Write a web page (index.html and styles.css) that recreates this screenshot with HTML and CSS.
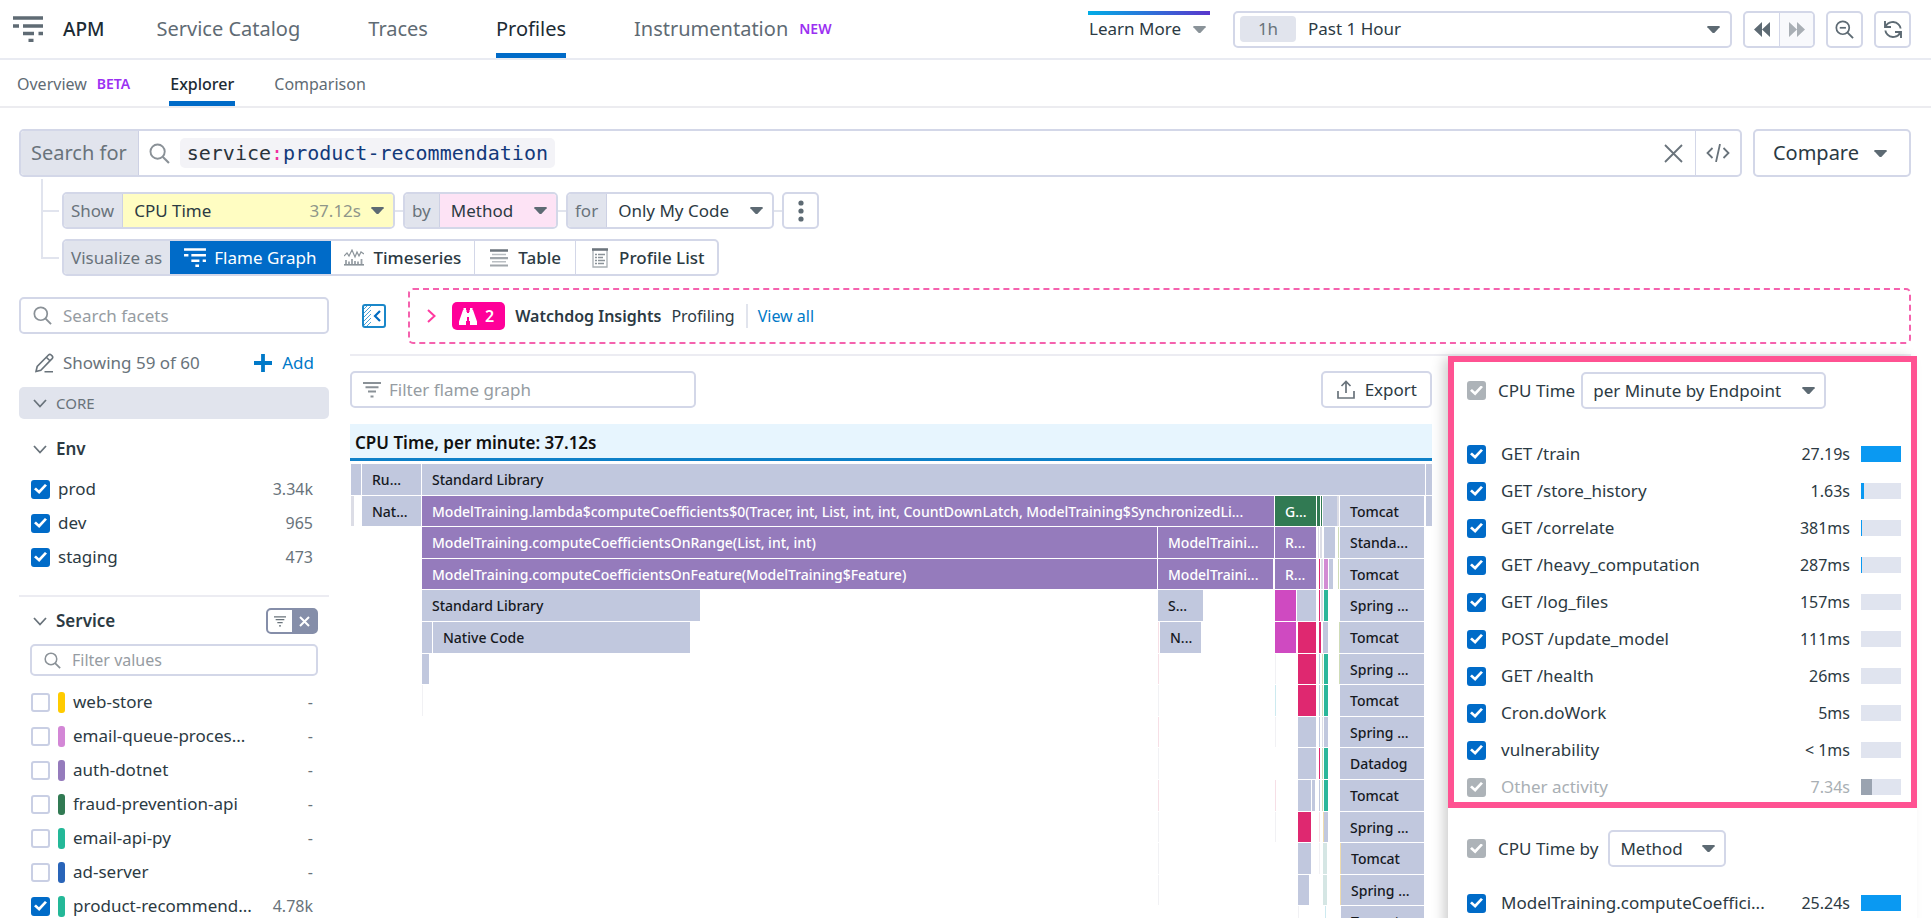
FILE: index.html
```html
<!DOCTYPE html>
<html lang="en">
<head>
<meta charset="utf-8">
<title>APM Profiles Explorer</title>
<link rel="stylesheet" href="styles.css">
</head>
<body>
<svg class="defs" aria-hidden="true">
  <symbol id="caret" viewBox="0 0 14 8"><path d="M0 0h14v1.500L8.500 7.300q-1.500 1.200-3 0L0 1.500z" fill="currentColor"/></symbol>
  <symbol id="search" viewBox="0 0 20 20"><circle cx="8.200" cy="8.200" r="6.800" fill="none" stroke="currentColor" stroke-width="1.800"/><path d="M13 13l6 6" stroke="currentColor" stroke-width="2"/></symbol>
  <symbol id="chevron" viewBox="0 0 14 9"><path d="M1 1l6 6.500L13 1" fill="none" stroke="currentColor" stroke-width="1.800"/></symbol>
  <symbol id="funnel" viewBox="0 0 18 16"><path d="M0 1h18M2.500 5.300h13M5 9.600h8M7.500 14.500h3" fill="none" stroke="currentColor" stroke-width="2"/></symbol>
  <symbol id="flame" viewBox="0 0 30 26"><path d="M0 2h30M0 10h6M10 10h20M10 17.500h11M25.500 17.500h4.500M15.500 24.500h5" fill="none" stroke="currentColor" stroke-width="3.600"/></symbol>
</svg>

<header class="topbar">
  <svg class="logo" viewBox="0 0 30 26"><use href="#flame"/></svg>
  <a class="brand" href="#">APM</a>
  <nav class="topnav">
    <a href="#">Service Catalog</a>
    <a href="#">Traces</a>
    <a href="#" class="active">Profiles</a>
    <a href="#">Instrumentation <span class="tag">NEW</span></a>
  </nav>
  <button class="learn">Learn More <svg class="caret"><use href="#caret"/></svg></button>
  <div class="timepicker">
    <span class="span-chip">1h</span>
    <div class="pick grow"><select aria-label="Time range"><option>Past 1 Hour</option></select><svg class="caret"><use href="#caret"/></svg></div>
  </div>
  <div class="pager">
    <button aria-label="Back"><svg width="16" height="15" viewBox="0 0 16 15"><path d="M8 0v15L0 7.500zM16 0v15L8 7.500z" fill="currentColor"/></svg></button>
    <button aria-label="Forward" disabled><svg width="16" height="15" viewBox="0 0 16 15"><path d="M0 0v15l8-7.500zM8 0v15l8-7.500z" fill="currentColor"/></svg></button>
  </div>
  <button class="square" aria-label="Zoom out"><svg width="19" height="19" viewBox="0 0 20 20"><use href="#search"/><path d="M5 8.200h6.500" stroke="currentColor" stroke-width="1.800"/></svg></button>
  <button class="square" aria-label="Refresh"><svg width="20" height="19" viewBox="0 0 20 19" fill="none" stroke="currentColor" stroke-width="1.900"><path d="M2 1v6h6M2.500 6.500C5 1.500 12 .5 15.500 4.300 16.800 5.600 17.500 7 17.600 8.500M18 18v-6h-6M17.500 12.500C15 17.500 8 18.500 4.500 14.700 3.200 13.400 2.500 12 2.400 10.500"/></svg></button>
</header>

<nav class="subnav">
  <a href="#">Overview <span class="tag">BETA</span></a>
  <a href="#" class="active">Explorer</a>
  <a href="#">Comparison</a>
</nav>

<div class="searchrow">
  <div class="searchbar">
    <label class="lbl" for="q">Search for</label>
    <svg class="mag" width="21" height="21"><use href="#search"/></svg>
    <code class="token">service<b>:</b><i>product-recommendation</i></code>
    <input id="q" type="text">
    <button class="clear" aria-label="Clear"><svg width="19" height="19" viewBox="0 0 19 19"><path d="M1 1l17 17M18 1L1 18" stroke="currentColor" stroke-width="1.800"/></svg></button>
    <button class="code" aria-label="Edit as code"><svg width="24" height="18" viewBox="0 0 24 18" fill="none" stroke="currentColor" stroke-width="1.800"><path d="M6.500 4L1.500 9l5 5M17.500 4l5 5-5 5M14 0l-4 18"/></svg></button>
  </div>
  <button class="compare">Compare <svg class="caret"><use href="#caret"/></svg></button>
</div>

<section class="tools">
  <svg class="tree" width="18" height="81" viewBox="0 0 18 81"><path d="M1 0v79h17M1 32h17" fill="none" stroke="#e1e4ee" stroke-width="2"/></svg>
  <div class="toolrows">
    <div class="toolrow">
      <div class="combo show"><label class="lbl" for="metric">Show</label>
        <div class="pick yellow"><select id="metric"><option>CPU Time</option></select><span class="amount">37.12s</span><svg class="caret"><use href="#caret"/></svg></div></div>
      <span class="link"></span>
      <div class="combo by"><label class="lbl" for="dim">by</label>
        <div class="pick rose"><select id="dim"><option>Method</option></select><svg class="caret"><use href="#caret"/></svg></div></div>
      <span class="link"></span>
      <div class="combo for"><label class="lbl" for="scope">for</label>
        <div class="pick"><select id="scope"><option>Only My Code</option></select><svg class="caret"><use href="#caret"/></svg></div></div>
      <span class="link"></span>
      <button class="square" aria-label="More options"><svg width="6" height="22" viewBox="0 0 6 22" fill="#5d6a73"><circle cx="3" cy="3" r="2.600"/><circle cx="3" cy="11" r="2.600"/><circle cx="3" cy="19" r="2.600"/></svg></button>
    </div>
    <div class="toolrow">
      <div class="combo views">
        <span class="lbl">Visualize as</span>
        <button class="on"><svg width="22" height="19"><use href="#flame"/></svg>Flame Graph</button>
        <button><svg width="20" height="17" viewBox="0 0 20 17"><path d="M0 7l3-3 2 3 3-6 3 7 2-5 2 4 2-4 3 2" fill="none" stroke="#8d959b" stroke-width="1.200"/><path d="M0 15.800h20" stroke="#8b9399" stroke-width="1.600"/><path d="M2 15v-4M5 15v-2.500M8 15v-5M11 15v-3M14 15v-2.500M17.500 15v-5" stroke="#9aa1a7" stroke-width="1.800"/></svg>Timeseries</button>
        <button class="table-view"><svg width="18" height="18" viewBox="0 0 18 18"><path d="M0 1.500h18" stroke="#6c757c" stroke-width="2.600"/><path d="M2 5.500h14M2 12.800h14" stroke="#b9bec2" stroke-width="1.400"/><path d="M0 9.200h18M0 16.500h18" stroke="#a0a6ab" stroke-width="2.200"/></svg>Table</button>
        <button><svg width="16" height="20" viewBox="0 0 16 20"><path d="M1 1.500h14V19H1z" fill="none" stroke="#a8aeb3" stroke-width="1.300"/><path d="M0 1.500h16" stroke="#6c757c" stroke-width="2.600"/><path d="M3 6.500h2M6 6.500h7M3 9.500h2M6 9.500h5M3 12.500h2M6 12.500h7M3 15.500h2M6 15.500h6" stroke="#8b9399" stroke-width="1.400"/></svg>Profile List</button>
      </div>
    </div>
  </div>
</section>

<div class="body">
  <aside class="facets">
    <label class="field"><svg width="19" height="19"><use href="#search"/></svg><input type="text" placeholder="Search facets" aria-label="Search facets"></label>
    <div class="showing">
      <svg width="19" height="20" viewBox="0 0 19 20" fill="none" stroke="#69737b" stroke-width="1.600"><path d="M1 18.500l1.200-5L13.500 2q1.300-1.300 2.700 0l.9.900q1.300 1.300 0 2.700L5.800 17.200zM11.300 4.200l3.600 3.600M9.500 18.700H18"/></svg>
      <span>Showing 59 of 60</span>
      <button class="add"><svg width="18" height="18" viewBox="0 0 18 18"><path d="M9 0v18M0 9h18" stroke="currentColor" stroke-width="3.800"/></svg>Add</button>
    </div>
    <button class="group"><svg width="14" height="9"><use href="#chevron"/></svg>CORE</button>
    <button class="facet-head"><svg width="14" height="9"><use href="#chevron"/></svg>Env</button>
    <ul class="facet-list">
      <li><label><input type="checkbox" checked>prod</label><span>3.34k</span></li>
      <li><label><input type="checkbox" checked>dev</label><span>965</span></li>
      <li><label><input type="checkbox" checked>staging</label><span>473</span></li>
    </ul>
    <div class="service-head">
      <button class="facet-title"><svg width="14" height="9"><use href="#chevron"/></svg>Service</button>
      <div class="mini"><button aria-label="Filter"><svg width="12" height="11"><use href="#funnel"/></svg></button><button class="dark" aria-label="Clear filter"><svg width="11" height="11" viewBox="0 0 11 11"><path d="M1 1l9 9M10 1l-9 9" stroke="#fff" stroke-width="2"/></svg></button></div>
    </div>
    <label class="field small"><svg width="17" height="17"><use href="#search"/></svg><input type="text" placeholder="Filter values" aria-label="Filter values"></label>
    <ul class="facet-list">
      <li><label><input type="checkbox"><em class="pill gold"></em>web-store</label><span>-</span></li>
      <li><label><input type="checkbox"><em class="pill orchid"></em>email-queue-proces...</label><span>-</span></li>
      <li><label><input type="checkbox"><em class="pill violet"></em>auth-dotnet</label><span>-</span></li>
      <li><label><input type="checkbox"><em class="pill green"></em>fraud-prevention-api</label><span>-</span></li>
      <li><label><input type="checkbox"><em class="pill teal"></em>email-api-py</label><span>-</span></li>
      <li><label><input type="checkbox"><em class="pill blue"></em>ad-server</label><span>-</span></li>
      <li><label><input type="checkbox" checked><em class="pill teal"></em>product-recommend...</label><span>4.78k</span></li>
    </ul>
  </aside>

  <main class="content">
    <div class="insights-row">
      <button class="collapse" aria-label="Collapse sidebar"><svg width="24" height="24" viewBox="0 0 24 24" fill="none" stroke="#1a87c9"><rect x="1" y="1" width="22" height="22" rx="2" fill="#fff" stroke-width="2"/><path d="M2 5l3-3M2 9l7-7M2 13l7-7M2 17l7-7M2 21l7-7M5 22l4-4" stroke-width=".8"/><path d="M18 7l-5 5 5 5" stroke="#006bc2" stroke-width="2.200"/></svg></button>
      <div class="insights">
        <svg class="arrow" width="9" height="14" viewBox="0 0 9 14"><path d="M1 1l6.500 6L1 13" fill="none" stroke="#ff3aa0" stroke-width="2"/></svg>
        <span class="badge"><svg width="18" height="17" viewBox="0 0 18 17" fill="#fff"><path d="M4 2h3.500v2H8v9H7v4H0v-3.500zM14 2h-3.500v2H10v9h1v4h7v-3.500zM4.500 0h2.500v2H4.500zM11 0h2.500v2H11zM8 5h2v4H8z"/></svg>2</span>
        <strong>Watchdog Insights</strong>
        <span>Profiling</span>
        <a href="#">View all</a>
      </div>
    </div>
    <div class="split">
      <section class="graph">
        <div class="graph-tools">
          <label class="field filter"><svg width="18" height="16"><use href="#funnel"/></svg><input type="text" placeholder="Filter flame graph" aria-label="Filter flame graph"></label>
          <button class="export"><svg width="18" height="19" viewBox="0 0 18 19" fill="none" stroke="#69737b" stroke-width="1.700"><path d="M1 11v7h16v-7M9 13V1.500M4.500 6L9 1.500 13.500 6"/></svg>Export</button>
        </div>
        <h2>CPU Time, per minute: 37.12s</h2>
        <div class="flamegraph">
          <div class="row"><i style="--x:1;--w:10"></i><i style="--x:12;--w:59">Ru...</i><i style="--x:72;--w:1003">Standard Library</i><i style="--x:1076;--w:6"></i></div>
          <div class="row"><i class="pale" style="--x:1;--w:3"></i><i style="--x:12;--w:59">Nat...</i><i class="violet" style="--x:72;--w:852">ModelTraining.lambda$computeCoefficients$0(Tracer, int, List, int, int, CountDownLatch, ModelTraining$SynchronizedLi...</i><i class="green" style="--x:925;--w:41">G...</i><i class="green" style="--x:967;--w:3"></i><i class="green" style="--x:971;--w:1"></i><i style="--x:973;--w:14"></i><i class="pale" style="--x:987;--w:2"></i><i style="--x:990;--w:84">Tomcat</i><i style="--x:1076;--w:6"></i></div>
          <div class="row"><i class="violet" style="--x:72;--w:735">ModelTraining.computeCoefficientsOnRange(List, int, int)</i><i class="violet" style="--x:808;--w:116">ModelTraini...</i><i class="violet" style="--x:925;--w:41">R...</i><i class="pale" style="--x:968;--w:1"></i><i class="pale" style="--x:970;--w:2"></i><i style="--x:974;--w:11"></i><i class="lime" style="--x:988;--w:1"></i><i style="--x:990;--w:84">Standa...</i></div>
          <div class="row"><i class="violet" style="--x:72;--w:735">ModelTraining.computeCoefficientsOnFeature(ModelTraining$Feature)</i><i class="violet" style="--x:808;--w:115">ModelTraini...</i><i class="violet" style="--x:925;--w:41">R...</i><i class="crimson" style="--x:969;--w:1"></i><i class="pale" style="--x:971;--w:2"></i><i class="orchid" style="--x:974;--w:4"></i><i style="--x:979;--w:4"></i><i class="lime" style="--x:988;--w:1"></i><i style="--x:990;--w:84">Tomcat</i></div>
          <div class="row"><i style="--x:72;--w:278">Standard Library</i><i style="--x:808;--w:45">S...</i><i class="magenta" style="--x:925;--w:21"></i><i style="--x:947;--w:19"></i><i class="crimson" style="--x:969;--w:1"></i><i class="pale" style="--x:971;--w:2"></i><i class="teal" style="--x:974;--w:4"></i><i style="--x:990;--w:84">Spring ...</i></div>
          <div class="row"><i style="--x:72;--w:10"></i><i style="--x:83;--w:257">Native Code</i><i class="blush" style="--x:808;--w:1"></i><i style="--x:810;--w:41">N...</i><i class="magenta" style="--x:925;--w:21"></i><i class="crimson" style="--x:948;--w:18"></i><i class="crimson" style="--x:969;--w:2"></i><i style="--x:973;--w:5"></i><i class="lime" style="--x:989;--w:1"></i><i style="--x:990;--w:84">Tomcat</i></div>
          <div class="row"><i style="--x:72;--w:7"></i><i class="blush" style="--x:808;--w:1"></i><i class="faint" style="--x:925;--w:1"></i><i class="crimson" style="--x:948;--w:18"></i><i style="--x:969;--w:1"></i><i class="lime" style="--x:972;--w:1"></i><i class="teal" style="--x:974;--w:4"></i><i class="lime" style="--x:989;--w:1"></i><i style="--x:990;--w:84">Spring ...</i></div>
          <div class="row"><i class="faint" style="--x:72;--w:1"></i><i class="faint" style="--x:808;--w:1"></i><i class="aqua" style="--x:925;--w:1"></i><i class="crimson" style="--x:948;--w:18"></i><i style="--x:969;--w:1"></i><i class="lime" style="--x:972;--w:1"></i><i class="teal" style="--x:974;--w:4"></i><i style="--x:990;--w:84">Tomcat</i></div>
          <div class="row"><i class="blush" style="--x:808;--w:1"></i><i class="faint" style="--x:925;--w:1"></i><i style="--x:948;--w:18"></i><i style="--x:969;--w:1"></i><i class="pale" style="--x:972;--w:1"></i><i style="--x:974;--w:4"></i><i style="--x:990;--w:84">Spring ...</i></div>
          <div class="row"><i class="faint" style="--x:808;--w:1"></i><i style="--x:948;--w:18"></i><i class="crimson" style="--x:969;--w:1"></i><i class="lime" style="--x:972;--w:1"></i><i class="teal" style="--x:974;--w:4"></i><i style="--x:990;--w:84">Datadog</i></div>
          <div class="row"><i class="blush" style="--x:808;--w:1"></i><i class="blush" style="--x:925;--w:1"></i><i style="--x:948;--w:13"></i><i style="--x:962;--w:3"></i><i style="--x:969;--w:1"></i><i class="lime" style="--x:972;--w:1"></i><i class="teal" style="--x:974;--w:4"></i><i style="--x:990;--w:84">Tomcat</i></div>
          <div class="row"><i class="faint" style="--x:808;--w:1"></i><i class="faint" style="--x:925;--w:1"></i><i class="crimson" style="--x:948;--w:13"></i><i class="blush" style="--x:969;--w:1"></i><i class="sand" style="--x:973;--w:1"></i><i style="--x:974;--w:4"></i><i style="--x:990;--w:84">Spring ...</i></div>
          <div class="row"><i class="faint" style="--x:808;--w:1"></i><i style="--x:948;--w:13"></i><i class="faint" style="--x:969;--w:1"></i><i class="mint" style="--x:973;--w:4"></i><i class="sand" style="--x:990;--w:1"></i><i style="--x:991;--w:83">Tomcat</i></div>
          <div class="row"><i class="faint" style="--x:808;--w:1"></i><i style="--x:948;--w:11"></i><i class="mint" style="--x:973;--w:4"></i><i class="sand" style="--x:990;--w:1"></i><i style="--x:991;--w:83">Spring ...</i></div>
          <div class="row"><i class="faint" style="--x:948;--w:1"></i><i class="aqua" style="--x:975;--w:1"></i><i style="--x:991;--w:83">Tomcat</i></div>
        </div>
      </section>

      <aside class="panel">
        <section class="endpoints">
          <div class="panel-head"><label><input type="checkbox" checked class="muted">CPU Time</label>
            <div class="pick boxed wide"><select aria-label="Breakdown"><option>per Minute by Endpoint</option></select><svg class="caret"><use href="#caret"/></svg></div></div>
          <ul class="measures">
            <li><label><input type="checkbox" checked>GET /train</label><span>27.19s</span><div class="bar"><div style="width:100%"></div></div></li>
            <li><label><input type="checkbox" checked>GET /store_history</label><span>1.63s</span><div class="bar"><div style="width:7%"></div></div></li>
            <li><label><input type="checkbox" checked>GET /correlate</label><span>381ms</span><div class="bar"><div style="width:2%"></div></div></li>
            <li><label><input type="checkbox" checked>GET /heavy_computation</label><span>287ms</span><div class="bar"><div style="width:1%"></div></div></li>
            <li><label><input type="checkbox" checked>GET /log_files</label><span>157ms</span><div class="bar"></div></li>
            <li><label><input type="checkbox" checked>POST /update_model</label><span>111ms</span><div class="bar"></div></li>
            <li><label><input type="checkbox" checked>GET /health</label><span>26ms</span><div class="bar"></div></li>
            <li><label><input type="checkbox" checked>Cron.doWork</label><span>5ms</span><div class="bar"></div></li>
            <li><label><input type="checkbox" checked>vulnerability</label><span>&lt; 1ms</span><div class="bar"></div></li>
            <li class="other"><label><input type="checkbox" checked class="muted">Other activity</label><span>7.34s</span><div class="bar"><div style="width:27%"></div></div></li>
          </ul>
        </section>
        <section class="methods">
          <div class="panel-head spaced"><label><input type="checkbox" checked class="muted">CPU Time by</label>
            <div class="pick boxed"><select aria-label="Group by"><option>Method</option></select><svg class="caret"><use href="#caret"/></svg></div></div>
          <ul class="measures">
            <li><label><input type="checkbox" checked>ModelTraining.computeCoeffici...</label><span>25.24s</span><div class="bar"><div style="width:100%"></div></div></li>
          </ul>
        </section>
      </aside>
    </div>
  </main>
</div>
</body>
</html>
```
FILE: styles.css
```css
:root {
  --ink: #2c3a43;
  --gray: #69737b;
  --line: #d3d7e8;
  --fill: #e1e4ed;
  --blue: #006bc8;
  --link: #0079c8;
}
* { box-sizing: border-box; }
body {
  margin: 0;
  height: 100vh;
  overflow: hidden;
  background: #fff;
  color: var(--ink);
  font: 16px/24px "Noto Sans", sans-serif;
}
a { color: inherit; text-decoration: none; }
button, input, select { font: inherit; color: inherit; }
button { margin: 0; padding: 0; border: 0; background: none; cursor: pointer; display: flex; align-items: center; white-space: nowrap; }
svg { flex: none; display: block; }
ul { list-style: none; margin: 0; padding: 0; }
.defs { position: absolute; width: 0; height: 0; }
.caret { width: 13px; height: 7px; color: #5d6a73; }
.grow { flex: 1; }

/* header */
.topbar { display: flex; align-items: center; height: 60px; padding: 0 20px 0 13px; border-bottom: 2px solid #e9ebf2; }
.logo { width: 30px; height: 26px; color: #5f6b74; }
.brand { margin: 0 52px 0 20px; font-size: 19px; font-weight: 500; color: #1c2b34; }
.topnav { display: flex; align-self: stretch; gap: 68px; font-size: 20px; color: #5f6b74; white-space: nowrap; }
.topnav a { display: flex; align-items: center; gap: 11px; border: solid transparent; border-width: 5px 0; }
.topnav .active, .subnav .active { color: #1c2b34; border-bottom-color: var(--blue); }
.tag { color: #9b30f2; font-size: 14px; font-weight: 600; }
.learn { margin-left: auto; margin-right: 23px; height: 37px; gap: 12px; padding: 0 4px 4px 1px; font-size: 17px; border-top: 4px solid; border-image: linear-gradient(90deg, #00aee6, #5a35cc) 1; }
.learn .caret { color: #8a9399; }
.timepicker { display: flex; align-items: center; flex: 0 1 499px; height: 37px; padding: 0 10px 0 5px; border: 2px solid var(--line); border-radius: 5px; font-size: 17px; }
.span-chip { width: 56px; margin-right: 12px; line-height: 26px; border-radius: 4px; background: var(--fill); color: var(--gray); text-align: center; }
.pager { display: flex; height: 37px; margin: 0 11px; border: 2px solid var(--line); border-radius: 5px; overflow: hidden; color: #5d6a73; }
.pager button { width: 34px; justify-content: center; }
.pager button:disabled { color: #a9afb5; background: #f8f9fc; border-left: 1px solid var(--line); }
.square { width: 37px; height: 37px; justify-content: center; border: 2px solid var(--line); border-radius: 5px; color: #5d6a73; }
.square + .square { margin-left: 11px; }

.subnav { display: flex; gap: 39px; height: 48px; padding-left: 17px; border-bottom: 2px solid #ececf0; color: #5f6b74; }
.subnav a { display: flex; align-items: center; gap: 10px; border: solid transparent; border-width: 7px 0 5px; }
.subnav .active { padding: 0 1px; font-weight: 500; }

/* pick: a select with its caret in the same cell */
.pick { display: grid; grid-template-columns: 1fr auto; align-items: center; }
.pick > * { grid-row: 1; grid-column: 2; }
.pick select { grid-column: 1 / 3; appearance: none; width: 100%; height: 100%; border: 0; background: none; padding: 0; outline: 0; }
.pick .caret { pointer-events: none; }

/* search */
.searchrow { display: flex; gap: 11px; margin: 21px 20px 0 19px; font-size: 20px; }
.searchbar { display: flex; align-items: center; flex: 1; height: 48px; border: 2px solid var(--line); border-radius: 5px; overflow: hidden; }
.lbl { display: flex; align-items: center; align-self: stretch; background: var(--fill); color: var(--gray); border-right: 1px solid #cdd1e4; white-space: nowrap; }
.searchbar .lbl { padding: 0 11px 0 10px; }
.mag { margin: 0 10px; color: #8a9197; }
.token { padding: 0 7px; border-radius: 5px; background: #f3f3f7; color: #2a343a; font: 20px/30px "DejaVu Sans Mono", monospace; }
.token b { font-weight: 400; color: #f02ea0; }
.token i { font-style: normal; color: #12397a; }
.searchbar input { flex: 1; min-width: 0; border: 0; outline: 0; background: none; padding: 0 8px; }
.clear { margin-right: 12px; color: #69737b; }
.code { align-self: stretch; width: 45px; justify-content: center; border-left: 1px solid var(--line); color: #69737b; }
.compare { height: 48px; gap: 15px; padding: 0 22px 0 18px; border: 2px solid var(--line); border-radius: 5px; }

/* query tools */
.tools { display: flex; margin: 2px 20px 0 41px; font-size: 17px; }
.tree { margin-right: 3px; }
.toolrows { display: flex; flex-direction: column; gap: 10px; padding-top: 13px; }
.toolrow { display: flex; align-items: center; }
.combo { display: flex; height: 37px; border: 2px solid var(--line); border-radius: 5px; overflow: hidden; }
.combo .lbl { padding: 0 8px 0 7px; }
.combo .pick { flex: 1; padding: 0 9px 0 11px; }
.amount { margin-right: 10px; color: #8f968a; pointer-events: none; }
.pick.yellow { grid-template-columns: 1fr auto auto; background: #fffdc2; }
.pick.yellow select { grid-column: 1 / 4; }
.pick.yellow .caret { grid-column: 3; }
.pick.rose { background: #fde3f5; }
.show { width: 333px; }
.by { width: 155px; }
.for { width: 208px; }
.link { width: 8px; height: 2px; background: var(--fill); }
.views button { gap: 9px; padding: 0 13px; border-right: 1px solid var(--line); font-weight: 500; }
.views .table-view { padding: 0 14px 0 15px; gap: 10px; }
.views button:last-child { border: 0; padding: 0 12px 0 16px; gap: 11px; }
.views .on { margin: -2px 0; padding: 0 15px 0 14px; gap: 8px; background: var(--blue); color: #fff; border: 0; font-weight: 400; }
.combo.views .lbl { border: 0; }

/* layout under the query */
.body { display: flex; gap: 21px; margin: 12px 14px 0 19px; }
.facets { flex: 0 0 310px; padding-top: 9px; }
.content { flex: 1; min-width: 0; }
.field { display: flex; align-items: center; gap: 11px; height: 37px; padding: 0 12px; border: 2px solid var(--line); border-radius: 5px; color: #8a9197; font-size: 17px; }
.field input { flex: 1; min-width: 0; border: 0; outline: 0; padding: 0; background: none; }
.field input::placeholder { color: #969ca2; }
.field.small { height: 32px; margin: 10px 11px 9px; font-size: 16px; }
.field.filter { flex: 0 1 346px; padding: 0 11px; gap: 8px; }

input[type="checkbox"] { appearance: none; display: grid; place-items: center; flex: none; width: 19px; height: 19px; margin: 0; border: 2px solid #c9cfe4; border-radius: 3px; background: #fff; }
input[type="checkbox"]:checked { border-color: var(--blue); background: var(--blue); }
input[type="checkbox"].muted:checked { border-color: #adb3b8; background: #adb3b8; }
input[type="checkbox"]:checked::before { content: ""; width: 13px; height: 10px; background: #fff; clip-path: polygon(0 52%, 15% 34%, 38% 62%, 84% 0, 100% 16%, 40% 100%); }

.showing { display: flex; align-items: center; height: 53px; padding: 4px 15px 0 16px; gap: 9px; font-size: 17px; color: var(--gray); }
.add { margin-left: auto; gap: 10px; color: var(--link); }
.group { width: 100%; height: 32px; gap: 16px; padding-left: 14px; border-radius: 5px; background: var(--fill); color: var(--gray); font-size: 15px; }
.facet-head, .facet-title { gap: 9px; padding-left: 14px; font-size: 17px; font-weight: 600; }
.facet-head { height: 30px; margin: 15px 0 8px; }
.group { gap: 9px; }
.group svg, .facet-head svg, .facet-title svg { color: #69737b; }
.facet-list li { display: flex; align-items: center; justify-content: space-between; height: 34px; padding: 0 16px 0 12px; color: var(--gray); }
.facet-list label { display: flex; align-items: center; gap: 8px; color: var(--ink); font-size: 17px; }
.pill { width: 7px; height: 21px; border-radius: 3px; }
.gold { background: #ffcb00; } .orchid { background: #d387d6; } .violet { background: #957bbc; }
.green { background: #317a53; } .teal { background: #24b898; } .blue { background: #2964b8; }
.service-head { display: flex; align-items: center; justify-content: space-between; margin-top: 21px; padding: 11px 11px 0 0; border-top: 2px solid #ececf2; }
.mini { display: flex; height: 26px; border: 2px solid #858ea9; border-radius: 5px; }
.mini button { width: 24px; justify-content: center; color: var(--gray); }
.mini .dark { background: #858ea9; }

.insights-row { display: flex; align-items: center; gap: 22px; margin-right: 6px; padding: 0 0 10px 12px; border-bottom: 2px solid #ececf2; }
.insights { flex: 1; display: flex; align-items: center; height: 56px; padding-left: 17px; border: 2px dashed #f562ae; border-radius: 5px; font-size: 16px; }
.badge { display: flex; align-items: center; gap: 8px; margin: 0 10px 0 16px; padding: 0 11px 0 7px; height: 28px; border-radius: 5px; background: #ff0099; color: #fff; font-weight: 600; }
.insights strong { margin-right: 10px; font-weight: 600; }
.insights a { margin-left: 11px; padding-left: 10px; border-left: 2px solid var(--fill); color: var(--link); }

.split { display: grid; grid-template-columns: minmax(0, 1fr) 469px; gap: 16px; }
.graph-tools { display: flex; justify-content: space-between; margin: 15px 0 16px; }
.export { height: 37px; gap: 10px; padding: 0 13px 0 14px; border: 2px solid var(--line); border-radius: 5px; font-size: 17px; }
.graph h2 { margin: 0 0 3px; padding-left: 5px; height: 37px; background: #e7f5fe; border-bottom: 3px solid #0e80c8; color: #111; font-size: 17px; line-height: 37px; font-weight: 600; }
.flamegraph { display: grid; grid-auto-rows: 1fr; height: 474px; color: #16191f; font-size: 14px; font-weight: 500; }
.row { position: relative; }
.row i { position: absolute; top: 0; bottom: 1px; left: calc(var(--x) / 1082 * 100%); width: calc(var(--w) / 1082 * 100%); background-color: #c1c8de; font-style: normal; line-height: 32px; overflow: hidden; white-space: nowrap; text-indent: 10px; }
.row .violet { background: #957bbc; color: #fff; }
.row .green { background: #317a53; color: #fff; }
.row .teal { background: #2bb79a; }
.row .orchid { background: #d28bd3; }
.row .magenta { background: #cf4ac1; }
.row .crimson { background: #df2870; }
.row .pale { background: #dcdde6; }
.row .faint { background: #f1f1f4; }
.row .blush { background: #f6dfe6; }
.row .lime { background: #cfdcb8; }
.row .aqua { background: #cdeaf0; }
.row .sand { background: #efdcae; }
.row .mint { background: #d5e6e4; }

.panel { background: #fff; box-shadow: -6px 0 12px -2px #0003; height: 600px; }
.endpoints { padding: 10px 10px 0 13px; border: 6px solid #ff5292; }
.methods { padding: 22px 16px 0 19px; }
.panel-head { display: flex; align-items: center; gap: 6px; margin-bottom: 30px; font-size: 17px; }
.panel-head.spaced { gap: 10px; margin-bottom: 21px; }
.panel-head label { display: flex; align-items: center; gap: 12px; }
.boxed { width: 118px; height: 37px; padding: 0 9px 0 10px; border: 2px solid var(--line); border-radius: 5px; }
.boxed.wide { width: 245px; }
.measures { display: grid; gap: 7px; }
.measures li { display: grid; grid-template-columns: 1fr auto 40px; align-items: center; gap: 11px; height: 30px; }
.measures label { display: flex; align-items: center; gap: 15px; font-size: 17px; white-space: nowrap; }
.other { color: #a9afb4; }
.bar { height: 16px; background: #e0e4ef; }
.bar div { height: 100%; background: #0a99f2; }
.other .bar div { background: #9aa3b0; }
```
